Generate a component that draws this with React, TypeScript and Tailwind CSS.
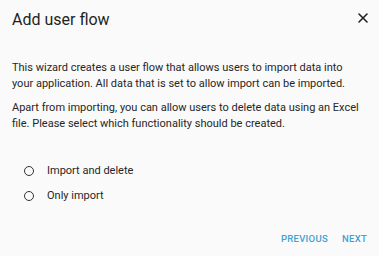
import { X } from "lucide-react";

const options = ["Import and delete", "Only import"];

export default function App() {
  return (
    <div className="w-[379px] h-[256px] bg-[#fafafa] text-[#262626] font-['Roboto',sans-serif] flex flex-col">
      <div className="flex items-start justify-between pl-3 pr-[8px] pt-[8px]">
        <h2 className="text-[16px] leading-[24px] text-[#1f1f1f]">Add user flow</h2>
        <X size={16} strokeWidth={2.4} className="mt-[2px] text-[#222]" />
      </div>

      <div className="px-3 pt-[28px] text-[11px] leading-[16px] space-y-[8px]">
        <p>
          This wizard creates a user flow that allows users to import data into
          <br />
          your application. All data that is set to allow import can be imported.
        </p>
        <p>
          Apart from importing, you can allow users to delete data using an Excel
          <br />
          file. Please select which functionality should be created.
        </p>
      </div>

      <div className="pl-[24px] pt-[27px] flex flex-col gap-[1px]">
        {options.map(o => (
          <label key={o} className="flex items-center h-[24px] text-[11px]">
            <span className="w-[10px] h-[10px] rounded-full border-[1.6px] border-[#333]" />
            <span className="ml-[13px]">{o}</span>
          </label>
        ))}
      </div>

      <div className="mt-auto flex justify-end gap-[14px] pr-[12px] pb-[9.5px]">
        <button className="text-[9.5px] leading-[16px] font-medium tracking-[0.03em] text-[#3ea2d4]">PREVIOUS</button>
        <button className="text-[9.5px] leading-[16px] font-medium tracking-[0.03em] text-[#3ea2d4]">NEXT</button>
      </div>
    </div>
  );
}
